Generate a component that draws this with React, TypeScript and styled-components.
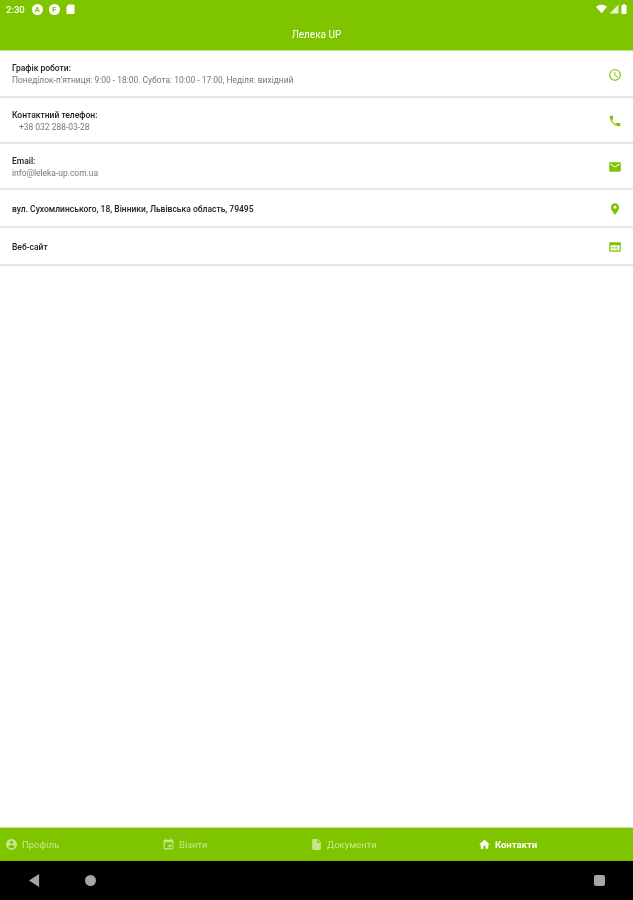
import React from "react";
import styled, { createGlobalStyle } from "styled-components";

const Global = createGlobalStyle`
  html, body { margin: 0; padding: 0; height: 100%; background: #fff; }
  #root { height: 100%; }
  * { box-sizing: border-box; }
`;

const GREEN = "#7ec500";

const Page = styled.div`
  width: 633px;
  height: 900px;
  display: flex;
  flex-direction: column;
  overflow: hidden;
  font-family: "Roboto", "Liberation Sans", sans-serif;
  background: #fff;
`;

const Header = styled.header`
  height: 51px;
  flex: none;
  background: ${GREEN};
  display: flex;
  flex-direction: column;
  border-bottom: 1px solid #c5e58a;
`;

const StatusBar = styled.div`
  height: 18px;
  padding: 0 5px 0 6px;
  display: flex;
  align-items: center;
  justify-content: space-between;
  color: #fff;
  filter: blur(0.5px);
`;

const StatusLeft = styled.div`
  display: flex;
  align-items: center;
  gap: 6px;
`;

const StatusRight = styled.div`
  display: flex;
  align-items: center;
  gap: 2px;
  margin-right: 1px;
`;

const Clock = styled.span`
  font-size: 9.5px;
  font-weight: 500;
  margin-right: 1px;
`;

const Title = styled.div`
  flex: 1;
  display: flex;
  align-items: center;
  justify-content: center;
  color: #fff;
  font-size: 10px;
  font-weight: 400;
  filter: blur(0.5px);
`;

const List = styled.main`
  flex: 1;
`;

const Row = styled.div<{ $h: number }>`
  height: ${(p) => p.$h}px;
  padding: 2px 11px 0 12px;
  display: flex;
  align-items: center;
  justify-content: space-between;
  border-bottom: 2px solid #e6e6e6;
`;

const RowText = styled.div`
  display: flex;
  flex-direction: column;
  gap: 1px;
  filter: blur(0.6px);
`;

const Label = styled.div`
  font-size: 8.5px;
  line-height: 11px;
  font-weight: 500;
  color: #222;
`;

const Value = styled.div<{ $indent?: boolean }>`
  font-size: 8.45px;
  line-height: 11px;
  color: #777;
  padding-left: ${(p) => (p.$indent ? 7 : 0)}px;
`;

const RowIcon = styled.svg`
  width: 14px;
  height: 14px;
  fill: ${GREEN};
  flex: none;
  filter: blur(0.45px);
`;

const TabBar = styled.nav`
  height: 34px;
  flex: none;
  background: ${GREEN};
  border-top: 1px solid #c5e58a;
  display: grid;
  grid-template-columns: 158px 148px 168px 159px;
`;

const Tab = styled.div<{ $active?: boolean; $left: number }>`
  display: flex;
  align-items: center;
  gap: 4px;
  padding-left: ${(p) => p.$left}px;
  color: ${(p) => (p.$active ? "#fff" : "#c6e88a")};
  font-size: 9.5px;
  font-weight: ${(p) => (p.$active ? 700 : 400)};
  filter: blur(0.55px);
`;

const TabIcon = styled.svg`
  width: 13px;
  height: 13px;
  fill: currentColor;
  flex: none;
`;

const NavBar = styled.div`
  height: 39px;
  flex: none;
  background: #000;
  display: flex;
  align-items: center;
  padding: 0 28px 0 29px;
  filter: blur(0.5px);
`;

const NavBack = styled.svg`
  width: 11px;
  height: 13px;
  fill: #a6a6a6;
`;

const NavHome = styled.div`
  width: 11px;
  height: 11px;
  border-radius: 50%;
  background: #a6a6a6;
  margin-left: 45px;
`;

const NavRecent = styled.div`
  width: 11px;
  height: 11px;
  border-radius: 2px;
  background: #a6a6a6;
  margin-left: auto;
`;

const StatusCircle = styled.span`
  width: 11px;
  height: 11px;
  border-radius: 50%;
  background: #fff;
  color: ${GREEN};
  font-size: 8px;
  font-weight: 700;
  line-height: 11px;
  text-align: center;
`;

const StatusSvg = styled.svg<{ $w: number; $o?: number }>`
  width: ${(p) => p.$w}px;
  height: 10px;
  fill: #fff;
  opacity: ${(p) => p.$o ?? 1};
`;

const P = {
  clock:
    "M11.99 2C6.47 2 2 6.48 2 12s4.47 10 9.99 10C17.52 22 22 17.52 22 12S17.52 2 11.99 2zM12 20c-4.42 0-8-3.58-8-8s3.58-8 8-8 8 3.58 8 8-3.58 8-8 8zm.5-13H11v6l5.25 3.15.75-1.23-4.5-2.67z",
  phone:
    "M6.62 10.79c1.44 2.83 3.76 5.14 6.59 6.59l2.2-2.2c.27-.27.67-.36 1.02-.24 1.12.37 2.33.57 3.57.57.55 0 1 .45 1 1V20c0 .55-.45 1-1 1-9.39 0-17-7.61-17-17 0-.55.45-1 1-1h3.5c.55 0 1 .45 1 1 0 1.25.2 2.45.57 3.57.11.35.03.74-.25 1.02l-2.2 2.2z",
  mail:
    "M20 4H4c-1.1 0-2 .9-2 2v12c0 1.1.9 2 2 2h16c1.1 0 2-.9 2-2V6c0-1.1-.9-2-2-2zm0 4l-8 5-8-5V6l8 5 8-5v2z",
  pin:
    "M12 2C8.13 2 5 5.13 5 9c0 5.25 7 13 7 13s7-7.75 7-13c0-3.87-3.13-7-7-7zm0 9.5c-1.38 0-2.5-1.12-2.5-2.5s1.12-2.5 2.5-2.5 2.5 1.12 2.5 2.5-1.12 2.5-2.5 2.5z",
  web:
    "M20 4H4c-1.1 0-2 .9-2 2v12c0 1.1.9 2 2 2h16c1.1 0 2-.9 2-2V6c0-1.1-.9-2-2-2zm-5 14H4v-4h11v4zm0-5H4V9h11v4zm5 5h-4V9h4v9z",
  person:
    "M12 2C6.48 2 2 6.48 2 12s4.48 10 10 10 10-4.48 10-10S17.52 2 12 2zm0 3c1.66 0 3 1.34 3 3s-1.34 3-3 3-3-1.34-3-3 1.34-3 3-3zm0 14.2c-2.5 0-4.71-1.28-6-3.22.03-1.99 4-3.08 6-3.08 1.99 0 5.97 1.09 6 3.08-1.29 1.94-3.5 3.22-6 3.22z",
  event:
    "M17 12h-5v5h5v-5zM16 1v2H8V1H6v2H5c-1.11 0-1.99.9-1.99 2L3 19c0 1.1.89 2 2 2h14c1.1 0 2-.9 2-2V5c0-1.1-.9-2-2-2h-1V1h-2zm3 18H5V8h14v11z",
  doc:
    "M6 2c-1.1 0-1.99.9-1.99 2L4 20c0 1.1.89 2 1.99 2H18c1.1 0 2-.9 2-2V8l-6-6H6zm7 7V3.5L18.5 9H13z",
  home: "M10 20v-6h4v6h5v-8h3L12 3 2 12h3v8z",
};

const rows = [
  { h: 47, label: "Графік роботи:", value: "Понеділок-п'ятниця: 9:00 - 18:00. Субота: 10:00 - 17:00, Неділя: вихідний", icon: P.clock },
  { h: 46, label: "Контактний телефон:", value: "+38 032 288-03-28", indent: true, icon: P.phone },
  { h: 46, label: "Email:", value: "info@leleka-up.com.ua", icon: P.mail },
  { h: 38, label: "вул. Сухомлинського, 18, Вінники, Львівська область, 79495", icon: P.pin },
  { h: 38, label: "Веб-сайт", icon: P.web },
];

const tabs = [
  { label: "Профіль", icon: P.person, left: 5 },
  { label: "Візити", icon: P.event, left: 4 },
  { label: "Документи", icon: P.doc, left: 4 },
  { label: "Контакти", icon: P.home, left: 4, active: true },
];

export default function App() {
  return (
    <Page>
      <Global />
      <Header>
        <StatusBar>
          <StatusLeft>
            <Clock>2:30</Clock>
            <StatusCircle>A</StatusCircle>
            <StatusCircle>F</StatusCircle>
            <StatusSvg $w={9} viewBox="0 0 18 20">
              <path d="M4 1h11a2 2 0 0 1 2 2v15a2 2 0 0 1-2 2H3a2 2 0 0 1-2-2V6z" />
            </StatusSvg>
          </StatusLeft>
          <StatusRight>
            <StatusSvg $w={11} viewBox="0 0 24 20">
              <path d="M12 19L0 5c7-6 17-6 24 0z" />
            </StatusSvg>
            <StatusSvg $w={10} $o={0.8} viewBox="0 0 20 20">
              <path d="M19 1v18H1z" />
            </StatusSvg>
            <StatusSvg $w={6} viewBox="0 0 12 20">
              <path d="M4 0h4v2h3v18H1V2h3z" />
            </StatusSvg>
          </StatusRight>
        </StatusBar>
        <Title>Лелека UP</Title>
      </Header>
      <List>
        {rows.map((r) => (
          <Row key={r.label} $h={r.h}>
            <RowText>
              <Label>{r.label}</Label>
              {r.value && <Value $indent={r.indent}>{r.value}</Value>}
            </RowText>
            <RowIcon viewBox="0 0 24 24">
              <path d={r.icon} />
            </RowIcon>
          </Row>
        ))}
      </List>
      <TabBar>
        {tabs.map((t) => (
          <Tab key={t.label} $active={t.active} $left={t.left}>
            <TabIcon viewBox="0 0 24 24">
              <path d={t.icon} />
            </TabIcon>
            {t.label}
          </Tab>
        ))}
      </TabBar>
      <NavBar>
        <NavBack viewBox="0 0 12 14">
          <path d="M11 0v14L0 7z" />
        </NavBack>
        <NavHome />
        <NavRecent />
      </NavBar>
    </Page>
  );
}
